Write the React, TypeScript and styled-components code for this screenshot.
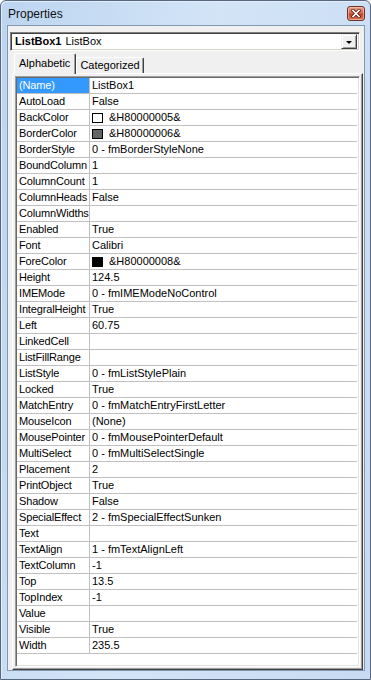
import React from "react";
import styled, { createGlobalStyle } from "styled-components";

interface Prop {
  name: string;
  value: string;
  swatch?: string;
}

const props: Prop[] = [
  { name: "(Name)", value: "ListBox1" },
  { name: "AutoLoad", value: "False" },
  { name: "BackColor", value: "&H80000005&", swatch: "#ffffff" },
  { name: "BorderColor", value: "&H80000006&", swatch: "#646464" },
  { name: "BorderStyle", value: "0 - fmBorderStyleNone" },
  { name: "BoundColumn", value: "1" },
  { name: "ColumnCount", value: "1" },
  { name: "ColumnHeads", value: "False" },
  { name: "ColumnWidths", value: "" },
  { name: "Enabled", value: "True" },
  { name: "Font", value: "Calibri" },
  { name: "ForeColor", value: "&H80000008&", swatch: "#000000" },
  { name: "Height", value: "124.5" },
  { name: "IMEMode", value: "0 - fmIMEModeNoControl" },
  { name: "IntegralHeight", value: "True" },
  { name: "Left", value: "60.75" },
  { name: "LinkedCell", value: "" },
  { name: "ListFillRange", value: "" },
  { name: "ListStyle", value: "0 - fmListStylePlain" },
  { name: "Locked", value: "True" },
  { name: "MatchEntry", value: "0 - fmMatchEntryFirstLetter" },
  { name: "MouseIcon", value: "(None)" },
  { name: "MousePointer", value: "0 - fmMousePointerDefault" },
  { name: "MultiSelect", value: "0 - fmMultiSelectSingle" },
  { name: "Placement", value: "2" },
  { name: "PrintObject", value: "True" },
  { name: "Shadow", value: "False" },
  { name: "SpecialEffect", value: "2 - fmSpecialEffectSunken" },
  { name: "Text", value: "" },
  { name: "TextAlign", value: "1 - fmTextAlignLeft" },
  { name: "TextColumn", value: "-1" },
  { name: "Top", value: "13.5" },
  { name: "TopIndex", value: "-1" },
  { name: "Value", value: "" },
  { name: "Visible", value: "True" },
  { name: "Width", value: "235.5" },
];

const GlobalStyle = createGlobalStyle`
  html, body {
    margin: 0;
    padding: 0;
    background: #ffffff;
  }
  body {
    font-family: "Liberation Sans", Arial, sans-serif;
    font-size: 11px;
    color: #000;
  }
`;

const Window = styled.div`
  box-sizing: border-box;
  width: 371px;
  height: 680px;
  display: flex;
  flex-direction: column;
  border: 1px solid #56677f;
  border-radius: 6px 6px 0 0;
  background: linear-gradient(100deg, #bcd5f0 0%, #d3e4f7 45%, #c6dbf2 100%);
  box-shadow: inset 1px 1px 0 #e4eefa;
`;

const TitleBar = styled.div`
  height: 24px;
  display: flex;
  align-items: flex-start;
  justify-content: space-between;
  padding: 0 5px 0 7px;
  flex-shrink: 0;
`;

const Title = styled.span`
  font-size: 12px;
  line-height: 12px;
  margin-top: 7px;
  color: #111;
`;

const CloseButton = styled.div`
  box-sizing: border-box;
  width: 18px;
  height: 15px;
  margin-top: 5px;
  border: 1px solid #6f3426;
  border-radius: 3px;
  background: linear-gradient(#e9a08c 0%, #d66a50 45%, #c2432a 55%, #d9765a 100%);
  box-shadow: inset 0 0 0 1px rgba(255, 220, 200, 0.5);
  display: flex;
  align-items: center;
  justify-content: center;
`;

const Client = styled.div`
  flex: 1;
  margin: 0 5px 8px 6px;
  border: 1px solid #8497b0;
  background: #f0f0f0;
  padding: 6px 1px 0 2px;
  display: flex;
  flex-direction: column;
`;

const Combo = styled.div`
  box-sizing: border-box;
  height: 19px;
  margin-right: 3px;
  display: flex;
  align-items: center;
  background: #fff;
  border-top: 1px solid #808080;
  border-left: 1px solid #808080;
  border-bottom: 1px solid #ffffff;
  border-right: 1px solid #ffffff;
  box-shadow: inset 1px 1px 0 #404040, inset -1px -1px 0 #d4d0c8;
  padding: 0 2px 0 4px;
`;

const ComboText = styled.span`
  flex: 1;
  line-height: 13px;
  white-space: nowrap;
`;

const ComboName = styled.b`
  font-weight: bold;
  margin-right: 4px;
`;

const ComboButton = styled.div`
  box-sizing: border-box;
  width: 16px;
  height: 15px;
  background: #f0f0f0;
  border-top: 1px solid #f0f0f0;
  border-left: 1px solid #f0f0f0;
  border-right: 1px solid #404040;
  border-bottom: 1px solid #404040;
  box-shadow: inset 1px 1px 0 #ffffff, inset -1px -1px 0 #a0a0a0;
  display: flex;
  align-items: center;
  justify-content: center;
`;

const Arrow = styled.div`
  width: 0;
  height: 0;
  border-left: 3px solid transparent;
  border-right: 3px solid transparent;
  border-top: 3px solid #000;
  margin-top: 1px;
`;

const TabStrip = styled.div`
  height: 20px;
  margin-top: 2px;
  padding-left: 4px;
  display: flex;
  align-items: flex-end;
  position: relative;
  z-index: 1;
`;

const Tab = styled.div<{ $active?: boolean }>`
  box-sizing: border-box;
  height: ${(p) => (p.$active ? "21px" : "16px")};
  margin-bottom: ${(p) => (p.$active ? "-1px" : "0")};
  padding: ${(p) => (p.$active ? "3px 5px 0 4px" : "1px 3px 0 3px")};
  background: #f0f0f0;
  border-top: 1px solid #ffffff;
  border-left: 1px solid #ffffff;
  border-right: 1px solid #404040;
  border-radius: 2px 2px 0 0;
  box-shadow: inset -1px 0 0 #a0a0a0;
  line-height: 13px;
  white-space: nowrap;
`;

const Panel = styled.div`
  flex: 1;
  box-sizing: border-box;
  margin: 0 0 0 2px;
  border-top: 1px solid #ffffff;
  border-left: 1px solid #ffffff;
  border-right: 1px solid #404040;
  border-bottom: 1px solid #404040;
  box-shadow: inset -1px -1px 0 #a0a0a0;
  padding: 2px;
  display: flex;
`;

const Grid = styled.div`
  flex: 1;
  box-sizing: border-box;
  background: #fff;
  border-top: 1px solid #a0a0a0;
  border-left: 1px solid #a0a0a0;
  border-right: 1px solid #ffffff;
  border-bottom: 1px solid #ffffff;
  box-shadow: inset 1px 1px 0 #696969, inset -1px -1px 0 #e3e3e3;
  padding: 1px 2px 1px 1px;
  overflow: hidden;
`;

const Row = styled.div`
  display: flex;
  height: 16px;
  box-sizing: border-box;
  border-bottom: 1px solid #c0c0c0;
`;

const NameCell = styled.div<{ $selected?: boolean }>`
  box-sizing: border-box;
  width: 73px;
  flex-shrink: 0;
  border-right: 1px solid #c0c0c0;
  padding-left: 2px;
  line-height: 15px;
  letter-spacing: -0.15px;
  white-space: nowrap;
  overflow: hidden;
  background: ${(p) => (p.$selected ? "#3399ff" : "transparent")};
  color: ${(p) => (p.$selected ? "#ffffff" : "#000000")};
`;

const ValueCell = styled.div`
  flex: 1;
  display: flex;
  align-items: center;
  padding-left: 2px;
  line-height: 15px;
  white-space: nowrap;
  overflow: hidden;
`;

const Swatch = styled.span<{ $color: string }>`
  box-sizing: border-box;
  width: 11px;
  height: 10px;
  border: 1px solid #000;
  background: ${(p) => p.$color};
  margin-right: 6px;
  flex-shrink: 0;
`;

const CloseIcon = () => (
  <svg width="10" height="9" viewBox="0 0 10 9">
    <path
      d="M2 1.5 L8 7.5 M8 1.5 L2 7.5"
      stroke="#5a2216"
      strokeWidth="3.2"
      strokeLinecap="square"
    />
    <path
      d="M2 1.5 L8 7.5 M8 1.5 L2 7.5"
      stroke="#ffffff"
      strokeWidth="1.6"
      strokeLinecap="square"
    />
  </svg>
);

const App = () => {
  return (
    <>
      <GlobalStyle />
      <Window>
        <TitleBar>
          <Title>Properties</Title>
          <CloseButton>
            <CloseIcon />
          </CloseButton>
        </TitleBar>
        <Client>
          <Combo>
            <ComboText>
              <ComboName>ListBox1</ComboName>ListBox
            </ComboText>
            <ComboButton>
              <Arrow />
            </ComboButton>
          </Combo>
          <TabStrip>
            <Tab $active>Alphabetic</Tab>
            <Tab>Categorized</Tab>
          </TabStrip>
          <Panel>
            <Grid>
              {props.map((p, i) => (
                <Row key={p.name}>
                  <NameCell $selected={i === 0}>{p.name}</NameCell>
                  <ValueCell>
                    {p.swatch && <Swatch $color={p.swatch} />}
                    {p.value}
                  </ValueCell>
                </Row>
              ))}
            </Grid>
          </Panel>
        </Client>
      </Window>
    </>
  );
};

export default App;
